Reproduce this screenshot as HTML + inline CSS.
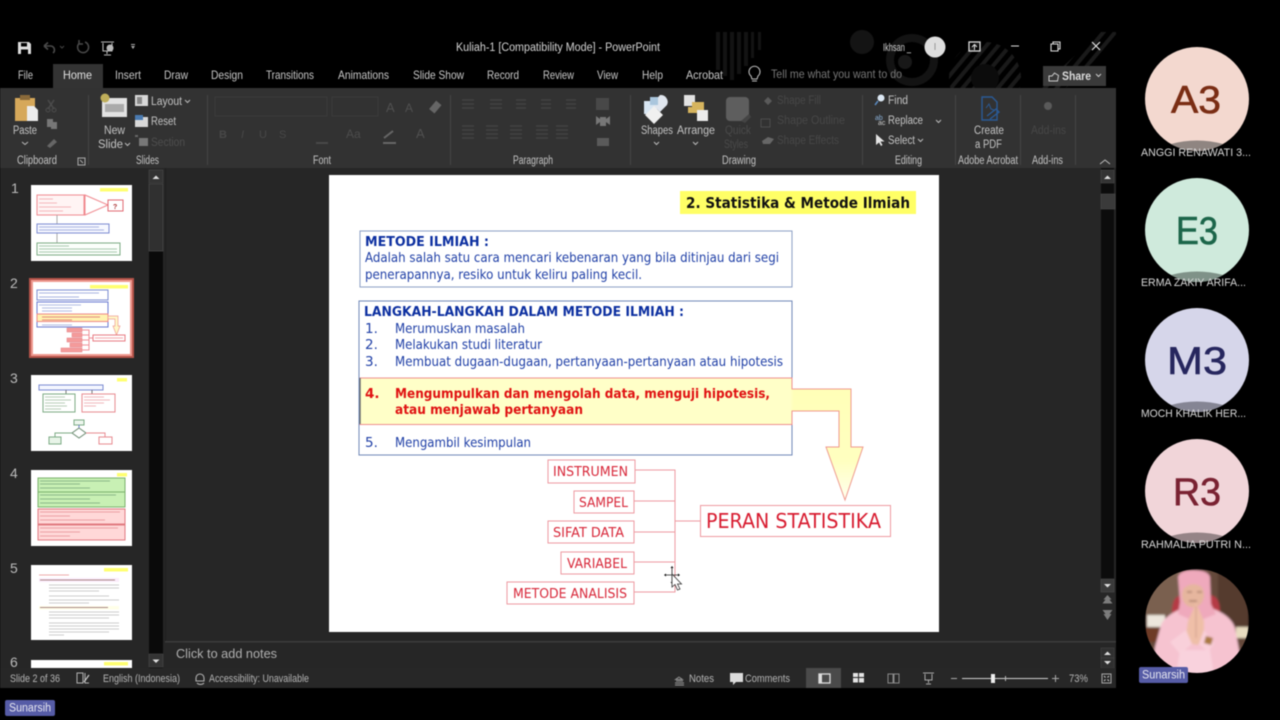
<!DOCTYPE html>
<html><head><meta charset="utf-8"><title>Kuliah-1 - PowerPoint</title>
<style>
html,body{margin:0;padding:0;background:#000;width:1280px;height:720px;overflow:hidden}
svg{display:block;filter:blur(.5px)}
text{font-family:"Liberation Sans",sans-serif;font-size:11px;fill:#d4d4d4}
.tab{font-size:12px;fill:#c8c8c8}
.lb{font-size:11.5px;fill:#c4c4c4}
.st{font-size:11px;fill:#b4b4b4}
.sl{font-family:"DejaVu Sans",sans-serif;font-size:13.5px;fill:#1f3fa6}
.slb{font-family:"DejaVu Sans",sans-serif;font-size:13.5px;font-weight:bold;fill:#0c2fa0}
.red{font-family:"DejaVu Sans",sans-serif;font-size:13.5px;font-weight:bold;fill:#e01212}
.bx{font-family:"DejaVu Sans",sans-serif;font-size:13.5px;fill:#d8283a}
.nm{font-size:11px;fill:#d8d8d8}
.av{font-size:39px;stroke-width:.6px}
.n{font-size:14px;fill:#bbb}
</style></head><body>
<svg width="1280" height="720" viewBox="0 0 1280 720" xmlns="http://www.w3.org/2000/svg">
<defs>
<clipPath id="ph"><circle cx="1197" cy="621" r="52"/></clipPath>
<filter id="b1"><feGaussianBlur stdDeviation="1"/></filter>
<linearGradient id="ag" x1="0" y1="0" x2="0" y2="1"><stop offset="0" stop-color="#ffffb8"/><stop offset=".65" stop-color="#ffffc0"/><stop offset="1" stop-color="#fffff0"/></linearGradient>
<pattern id="dg" width="9" height="9" patternUnits="userSpaceOnUse" patternTransform="rotate(40)"><rect width="4" height="9" fill="#1a1a1a"/></pattern>
</defs>
<rect width="1280" height="720" fill="#000"/>

<!-- title bar -->
<rect x="0" y="32" width="1116" height="56" fill="#000"/>
<g fill="#131313"><rect x="716" y="32" width="4" height="38"/><rect x="723" y="32" width="4" height="44"/><rect x="730" y="32" width="4" height="48"/><rect x="737" y="32" width="4" height="42"/><rect x="744" y="32" width="4" height="34"/><rect x="751" y="32" width="3" height="26"/><rect x="758" y="32" width="3" height="18"/></g>
<circle cx="862" cy="42" r="12" fill="#141414"/>
<circle cx="912" cy="60" r="22" fill="none" stroke="#131313" stroke-width="8"/>
<circle cx="905" cy="62" r="7" fill="#181818"/>
<circle cx="985" cy="78" r="36" fill="url(#dg)"/>
<circle cx="985" cy="78" r="14" fill="#0c0c0c"/>
<path d="M1040 88L1100 32H1116V40L1066 88Z" fill="url(#dg)"/>

<!-- QAT -->
<path d="M18 42h11l2 2v10H18z" fill="#dcdcdc"/><rect x="21" y="43" width="6" height="3.500" fill="#000"/><rect x="21" y="49.500" width="7" height="4.500" fill="#000"/>
<path d="M44 46l4-3.500M44 46l4 3.500M44 46h7a4 4 0 0 1 2 7" stroke="#4a4a4a" stroke-width="1.600" fill="none"/>
<path d="M60 46l2 2 2-2" stroke="#444" fill="none"/>
<path d="M85 42a5.500 5.500 0 1 1-6 1.500M79 40v4h4" stroke="#4a4a4a" stroke-width="1.500" fill="none"/>
<path d="M101 42h13M103 43v8h9v-8M107 51v3M104 55h7" stroke="#b8b8b8" stroke-width="1.100" fill="none"/><circle cx="110" cy="48" r="3.500" fill="#b8b8b8"/>
<path d="M131 46h4l-2 3z" fill="#aaa"/><rect x="131" y="44" width="4" height="1" fill="#aaa"/>
<text x="456" y="51" textLength="204" lengthAdjust="spacingAndGlyphs" style="font-size:11.500px">Kuliah-1 [Compatibility Mode]  -  PowerPoint</text>
<text x="883" y="51" textLength="28" lengthAdjust="spacingAndGlyphs" style="font-size:11px">Ikhsan _</text>
<circle cx="935" cy="47" r="10.500" fill="#dedede"/><rect x="934.500" y="43" width="1" height="7" fill="#999"/>
<rect x="969" y="42" width="11" height="9" fill="none" stroke="#ddd" stroke-width="1.300"/><path d="M974.500 50v-5M972 47l2.500-2.500 2.500 2.500" stroke="#ddd" fill="none"/>
<rect x="1011" y="45.500" width="8" height="1" fill="#ddd"/>
<path d="M1051 44h7v7h-7zM1053 44v-2h7v7h-2" fill="none" stroke="#ddd" stroke-width="1.100"/>
<path d="M1092 42l8 8M1100 42l-8 8" stroke="#e6e6e6" stroke-width="1.200"/>

<!-- tabs -->
<rect x="53" y="64" width="50" height="24" fill="#333"/>
<text class="tab" x="18" y="79" textLength="15" lengthAdjust="spacingAndGlyphs">File</text>
<text class="tab" x="63" y="79" textLength="29" lengthAdjust="spacingAndGlyphs" style="fill:#e2e2e2">Home</text>
<text class="tab" x="115" y="79" textLength="26" lengthAdjust="spacingAndGlyphs">Insert</text>
<text class="tab" x="164" y="79" textLength="24" lengthAdjust="spacingAndGlyphs">Draw</text>
<text class="tab" x="211" y="79" textLength="32" lengthAdjust="spacingAndGlyphs">Design</text>
<text class="tab" x="266" y="79" textLength="48" lengthAdjust="spacingAndGlyphs">Transitions</text>
<text class="tab" x="338" y="79" textLength="51" lengthAdjust="spacingAndGlyphs">Animations</text>
<text class="tab" x="413" y="79" textLength="51" lengthAdjust="spacingAndGlyphs">Slide Show</text>
<text class="tab" x="487" y="79" textLength="32" lengthAdjust="spacingAndGlyphs">Record</text>
<text class="tab" x="543" y="79" textLength="31" lengthAdjust="spacingAndGlyphs">Review</text>
<text class="tab" x="597" y="79" textLength="21" lengthAdjust="spacingAndGlyphs">View</text>
<text class="tab" x="642" y="79" textLength="21" lengthAdjust="spacingAndGlyphs">Help</text>
<text class="tab" x="686" y="79" textLength="37" lengthAdjust="spacingAndGlyphs">Acrobat</text>
<path d="M751 76a5.500 5.500 0 1 1 7 0l-1 3h-5z M752 81h5" fill="none" stroke="#bbb" stroke-width="1.100"/>
<text class="tab" x="771" y="78" textLength="131" lengthAdjust="spacingAndGlyphs" style="fill:#777">Tell me what you want to do</text>
<rect x="1043" y="66" width="63" height="20" fill="#3a3a3a"/>
<path d="M1049 76h3l2.500-3 4 2.500-1 5.500h-8.500z" fill="none" stroke="#ccc"/>
<text x="1062" y="80" textLength="29" lengthAdjust="spacingAndGlyphs" style="font-weight:bold;fill:#dcdcdc;font-size:12px">Share</text>
<path d="M1096 74l2.500 2.500 2.500-2.500" stroke="#ccc" fill="none"/>

<!-- ribbon -->
<rect x="0" y="88" width="1116" height="80" fill="#323232"/>
<g fill="#454545"><rect x="88" y="95" width="1" height="70"/><rect x="207" y="95" width="1" height="70"/><rect x="450" y="95" width="1" height="70"/><rect x="630" y="95" width="1" height="70"/><rect x="862" y="95" width="1" height="70"/><rect x="955" y="95" width="1" height="70"/><rect x="1020" y="95" width="1" height="70"/><rect x="1075" y="95" width="1" height="70"/></g>
<!-- clipboard -->
<path d="M15 98h20v23H15z" fill="#d6a85a"/><rect x="20" y="95" width="10" height="5" fill="#8a6a3a"/><path d="M27 106h7l4 4v11H27z" fill="#ececec"/>
<text class="lb" x="13" y="134" textLength="24" lengthAdjust="spacingAndGlyphs">Paste</text>
<path d="M22 142l3 2.500 3-2.500" stroke="#bbb" fill="none"/>
<path d="M48 100l6 9M54 100l-6 9" stroke="#4c4c4c" stroke-width="1.500"/><circle cx="48" cy="110" r="2" fill="none" stroke="#4c4c4c"/><circle cx="54" cy="110" r="2" fill="none" stroke="#4c4c4c"/>
<path d="M47 119h6v8h-6zM51 122h6v7h-6z" fill="#777"/>
<path d="M47 146l7-7 3 3-7 6z" fill="#666"/>
<text class="lb" x="17" y="164" textLength="40" lengthAdjust="spacingAndGlyphs">Clipboard</text>
<rect x="78" y="158" width="7" height="7" fill="none" stroke="#aaa"/><path d="M80 160l3 3" stroke="#aaa"/>
<!-- slides -->
<rect x="102" y="98" width="25" height="19" fill="#e2e2e2"/><rect x="105" y="104" width="19" height="8" fill="#aaa"/><circle cx="105" cy="98" r="4.500" fill="#bfae5a"/>
<text class="lb" x="104" y="134" textLength="21" lengthAdjust="spacingAndGlyphs">New</text>
<text class="lb" x="98" y="148" textLength="25" lengthAdjust="spacingAndGlyphs">Slide</text>
<path d="M125 143l2.500 2.500 2.500-2.500" stroke="#bbb" fill="none"/>
<rect x="135" y="95" width="13" height="11" fill="#d8d8d8"/><rect x="137" y="97" width="5" height="7" fill="#888"/>
<rect x="135" y="117" width="13" height="10" fill="#d8d8d8"/><rect x="135" y="115" width="8" height="5" fill="#4a7ab0"/>
<rect x="139" y="138" width="9" height="8" fill="#777"/><rect x="135" y="135" width="3" height="2" fill="#666"/>
<text class="lb" x="151" y="105" textLength="31" lengthAdjust="spacingAndGlyphs">Layout</text>
<path d="M185 100l2.500 2.500 2.500-2.500" stroke="#bbb" fill="none"/>
<text class="lb" x="151" y="125" textLength="25" lengthAdjust="spacingAndGlyphs">Reset</text>
<text class="lb" x="151" y="146" textLength="34" lengthAdjust="spacingAndGlyphs" style="fill:#4e4e4e">Section</text>
<text class="lb" x="136" y="164" textLength="23" lengthAdjust="spacingAndGlyphs">Slides</text>
<!-- font (disabled) -->
<rect x="215" y="97" width="112" height="19" fill="none" stroke="#3b3b3b"/><rect x="332" y="97" width="46" height="19" fill="none" stroke="#3b3b3b"/>
<text x="386" y="112" style="fill:#505050;font-size:13px">A</text><text x="405" y="112" style="fill:#505050;font-size:12px">A</text><text x="219" y="138" style="fill:#484848;font-weight:bold">B</text><text x="241" y="138" style="fill:#484848;font-style:italic">I</text><text x="259" y="138" style="fill:#484848">U</text><text x="279" y="138" style="fill:#484848">S</text><text x="346" y="138" style="fill:#4c4c4c;font-size:12px">Aa</text><text x="416" y="138" style="fill:#505050;font-size:13px">A</text>
<rect x="432" y="102" width="7" height="11" fill="#666" transform="rotate(40 436 107)"/>
<rect x="383" y="142" width="13" height="2" fill="#666"/><path d="M384 138l9-7" stroke="#666" stroke-width="2"/>
<rect x="316" y="142" width="12" height="2" fill="#484848"/>
<text class="lb" x="313" y="164" textLength="18" lengthAdjust="spacingAndGlyphs">Font</text>
<!-- paragraph (disabled) -->
<g stroke="#464646" stroke-width="1.200"><path d="M462 100h12M462 104h12M462 108h12M490 100h12M490 104h12M490 108h12M516 100h10M516 104h10M516 108h10M541 100h10M541 104h10M541 108h10M566 100h10M566 104h10M566 108h10M462 126h12M462 130h12M462 134h12M462 138h12M486 126h12M486 130h12M486 134h12M486 138h12M510 126h12M510 130h12M510 134h12M510 138h12M536 126h12M536 130h12M536 134h12M536 138h12M556 126h12M556 130h12M556 134h12M556 138h12"/></g>
<rect x="596" y="98" width="13" height="12" fill="#484848"/>
<path d="M596 116l4 3v3l-4 3zM610 116l-4 3v3l4 3zM600 117h6v9h-6z" fill="#777"/>
<rect x="597" y="138" width="12" height="8" fill="#5a5a5a"/>
<text class="lb" x="513" y="164" textLength="40" lengthAdjust="spacingAndGlyphs">Paragraph</text>
<!-- drawing -->
<path d="M644 101h13v13h-13z" fill="#d8e6f2"/><path d="M660 95a7 7 0 0 1 7 10l-7 7-8-8z" fill="#e0e6ee"/><path d="M654 106l9 9-9 9-9-9z" fill="#f0f0f0"/><rect x="650" y="97" width="8" height="8" fill="#aac6dd"/>
<text class="lb" x="641" y="134" textLength="32" lengthAdjust="spacingAndGlyphs">Shapes</text>
<path d="M654 142l2.500 2.500 2.500-2.500" stroke="#bbb" fill="none"/>
<rect x="684" y="95" width="11" height="11" fill="#e2e2e2"/><rect x="692" y="102" width="12" height="11" fill="#d6b45e"/><rect x="697" y="110" width="11" height="11" fill="#ececec"/><rect x="688" y="107" width="8" height="6" fill="#d6b45e"/>
<text class="lb" x="677" y="134" textLength="38" lengthAdjust="spacingAndGlyphs">Arrange</text>
<path d="M693 142l2.500 2.500 2.500-2.500" stroke="#bbb" fill="none"/>
<rect x="726" y="97" width="23" height="24" rx="4" fill="#5e5e5e"/><path d="M741 121l8-7 2 3-6 6z" fill="#444"/>
<text class="lb" x="725" y="134" textLength="26" lengthAdjust="spacingAndGlyphs" style="fill:#4a4a4a">Quick</text>
<text class="lb" x="724" y="148" textLength="24" lengthAdjust="spacingAndGlyphs" style="fill:#4a4a4a">Styles</text>
<path d="M764 101l4-4 4 4-4 4z" fill="#5a5a5a"/><rect x="761" y="119" width="9" height="8" fill="none" stroke="#4c4c4c"/><path d="M762 141l6-4 6 2-4 5h-7z" fill="#666"/>
<text class="lb" x="777" y="104" textLength="44" lengthAdjust="spacingAndGlyphs" style="fill:#474747">Shape Fill</text>
<text class="lb" x="777" y="124" textLength="68" lengthAdjust="spacingAndGlyphs" style="fill:#474747">Shape Outline</text>
<text class="lb" x="777" y="144" textLength="62" lengthAdjust="spacingAndGlyphs" style="fill:#474747">Shape Effects</text>
<text class="lb" x="722" y="164" textLength="34" lengthAdjust="spacingAndGlyphs">Drawing</text>
<!-- editing -->
<circle cx="881" cy="98" r="3.500" fill="#dce8f4"/><path d="M878 101l-3 4" stroke="#5a8ac0" stroke-width="1.500"/>
<text class="lb" x="888" y="104" textLength="20" lengthAdjust="spacingAndGlyphs">Find</text>
<text x="875" y="120" style="font-size:7px;fill:#8ab0d8">ab</text><text x="878" y="125" style="font-size:7px;fill:#ccc">ac</text>
<text class="lb" x="888" y="124" textLength="35" lengthAdjust="spacingAndGlyphs">Replace</text>
<path d="M936 120l2.500 2.500 2.500-2.500" stroke="#bbb" fill="none"/>
<path d="M876 134v11l3-2.500 2 3.500 1.500-1-2-3.500h4z" fill="#e4e4e4"/>
<text class="lb" x="888" y="144" textLength="27" lengthAdjust="spacingAndGlyphs">Select</text>
<path d="M918 139l2.500 2.500 2.500-2.500" stroke="#bbb" fill="none"/>
<text class="lb" x="895" y="164" textLength="27" lengthAdjust="spacingAndGlyphs">Editing</text>
<!-- acrobat -->
<path d="M982 97h10l5 5v18h-15z" fill="none" stroke="#2a5a96" stroke-width="1.400"/><path d="M987 116l9-7 3 3-9 7" fill="none" stroke="#2a5a96" stroke-width="1.400"/><path d="M986 108l3-4 2 5 3 1" fill="none" stroke="#2a5a96"/>
<text class="lb" x="974" y="134" textLength="30" lengthAdjust="spacingAndGlyphs">Create</text>
<text class="lb" x="975" y="148" textLength="27" lengthAdjust="spacingAndGlyphs">a PDF</text>
<text class="lb" x="958" y="164" textLength="60" lengthAdjust="spacingAndGlyphs">Adobe Acrobat</text>
<!-- add-ins -->
<circle cx="1048" cy="106" r="4" fill="#5a5a5a"/>
<text class="lb" x="1031" y="134" textLength="35" lengthAdjust="spacingAndGlyphs" style="fill:#474747">Add-ins</text>
<text class="lb" x="1032" y="164" textLength="31" lengthAdjust="spacingAndGlyphs">Add-ins</text>
<path d="M1100 164l5-4 5 4" stroke="#bbb" fill="none"/>

<!-- main area -->
<rect x="0" y="168" width="1116" height="500" fill="#262626"/>
<rect x="165" y="168" width="1" height="474" fill="#1f1f1f"/>
<!-- thumbs scrollbar -->
<rect x="149" y="170" width="14" height="498" fill="#0a0a0a"/>
<rect x="149" y="170" width="14" height="13" fill="#333" stroke="#4a4a4a" stroke-width=".6"/><path d="M152.500 179l3.500-3.500 3.500 3.500z" fill="#ddd"/>
<rect x="149" y="184" width="14" height="67" fill="#303030" stroke="#484848" stroke-width=".8"/>
<rect x="149" y="654" width="14" height="13" fill="#333" stroke="#4a4a4a" stroke-width=".6"/><path d="M152.500 659.500l3.500 3.500 3.500-3.500z" fill="#ddd"/>

<!-- slide numbers -->
<text class="n" x="11" y="193">1</text><text class="n" x="10" y="288">2</text><text class="n" x="10" y="383">3</text><text class="n" x="10" y="478">4</text><text class="n" x="10" y="573">5</text><text class="n" x="10" y="667">6</text>

<!-- thumb 1 -->
<rect x="31" y="185" width="101" height="76" fill="#fff"/>
<rect x="100" y="188" width="28" height="3.500" fill="#ffff70"/>
<rect x="37" y="195" width="47" height="20" fill="#fff4f4" stroke="#f08a90"/>
<g stroke="#f5b8bc"><path d="M39 199h14M39 203h18M39 207h32M39 211h24"/></g>
<path d="M85 195l23 10-23 10z" fill="#fff" stroke="#f08a90"/>
<rect x="108" y="200" width="15" height="11" fill="#fff" stroke="#e06a72"/><text x="113" y="209" style="font-size:7px;font-weight:bold;fill:#a33">?</text>
<path d="M57 215v29" stroke="#aaa"/>
<rect x="37" y="224" width="72" height="9" fill="#f6f8ff" stroke="#7a8ad0"/><path d="M39 227h60M39 230h65" stroke="#a8b4e0"/>
<rect x="37" y="243" width="83" height="12" fill="#fbfffb" stroke="#7cab84"/><path d="M39 246h30M39 249h78M39 252h78" stroke="#a8c8ae"/>

<!-- thumb 2 -->
<rect x="29" y="278" width="105" height="80" fill="#b5534a"/>
<rect x="31" y="280" width="101" height="76" fill="#ef9a90"/>
<rect x="33" y="282" width="97" height="72" fill="#fff"/>
<rect x="90" y="285" width="38" height="3.500" fill="#ffff70"/>
<rect x="37" y="290" width="71" height="10" fill="#fff" stroke="#7a8ad0"/><path d="M39 293h60M39 297h40" stroke="#a8b4e0"/>
<rect x="37" y="302" width="71" height="25" fill="#fff" stroke="#6a7ad0"/><path d="M39 305h42M42 308h30M42 311h30M42 314h60M42 325h30" stroke="#b0bae4"/>
<rect x="37" y="314" width="71" height="7.500" fill="#fff3b0" stroke="#e88"/><path d="M42 317h58M42 320h30" stroke="#e58a80"/>
<path d="M108 316h10v10h2l-3.500 9-3.500-9h2v-7h-7z" fill="#fff8c8" stroke="#ee9a90" stroke-width=".7"/>
<g fill="#f49a9a" stroke="#e27a80" stroke-width=".5"><rect x="67" y="328" width="15" height="4"/><rect x="72" y="333" width="10" height="4"/><rect x="67" y="338" width="15" height="4"/><rect x="70" y="343" width="12" height="4"/><rect x="61" y="348" width="21" height="4"/></g>
<path d="M82 330h7v20h-7M82 335h7M82 340h7M82 345h7M89 338h4" stroke="#f09098" fill="none"/>
<rect x="93" y="335" width="32" height="6" fill="#fff" stroke="#e87a82"/><path d="M95 338h28" stroke="#f5a8ac"/>

<!-- thumb 3 -->
<rect x="31" y="375" width="101" height="76" fill="#fff"/>
<rect x="117" y="378" width="10" height="3.500" fill="#ffff70"/>
<rect x="39" y="385" width="64" height="5" fill="#f4f6ff" stroke="#7a8ad0"/>
<path d="M66 390v4M92 390v4" stroke="#777"/>
<rect x="43" y="394" width="32" height="18" fill="#fff" stroke="#7cab84"/><path d="M45 397h20M45 400h26M45 403h20M45 406h22M45 409h16" stroke="#b8ceb8"/>
<rect x="82" y="394" width="33" height="18" fill="#fff" stroke="#e88a90"/><path d="M84 397h20M84 400h26M84 403h20M84 406h12" stroke="#f0b8bc"/>
<rect x="74" y="420" width="10" height="5" fill="#eef6ee" stroke="#7cab84"/>
<path d="M79 425v3" stroke="#6a7ad0"/><path d="M79 428l7 5-7 5-7-5z" fill="#fff" stroke="#6a8a70"/>
<path d="M72 433H55v4" fill="none" stroke="#7cab84"/><path d="M86 433h19v4" fill="none" stroke="#e88a90"/>
<rect x="49" y="437" width="12" height="7" fill="#e8f4e8" stroke="#7cab84"/><rect x="99" y="437" width="13" height="7" fill="#fff" stroke="#e88a90"/>

<!-- thumb 4 -->
<rect x="31" y="470" width="101" height="76" fill="#fff"/>
<rect x="117" y="473" width="10" height="3.500" fill="#ffff70"/>
<rect x="38" y="478" width="87" height="14" fill="#c8f0b4" stroke="#7ab06c"/><rect x="38" y="492" width="87" height="15" fill="#c8f0b4" stroke="#7ab06c"/>
<path d="M40 481h70M40 484h40M40 488h50M40 495h76M40 499h50M40 503h60" stroke="#8ab88a"/>
<rect x="38" y="509" width="87" height="15" fill="#ffd8d8" stroke="#e07a80"/><rect x="38" y="525" width="87" height="15" fill="#ffd8d8" stroke="#e07a80"/>
<path d="M40 512h80M40 516h30M40 520h65M40 528h78M40 532h40M40 536h30" stroke="#eca0a4"/>

<!-- thumb 5 -->
<rect x="31" y="565" width="101" height="75" fill="#fff"/>
<rect x="104" y="568" width="24" height="3.500" fill="#ffff70"/>
<path d="M39 575h30" stroke="#eaa"/>
<rect x="39" y="578" width="80" height="4" fill="#fbecfb"/><path d="M40 580h75" stroke="#a88"/>
<path d="M49 585h70M49 588h70M49 591h50M49 596h60M49 600h70M49 603h40" stroke="#ccc"/>
<rect x="39" y="606" width="80" height="3.500" fill="#ffffe8"/><path d="M40 607.500h68" stroke="#a88"/>
<path d="M49 612h70M49 615h70M49 618h60M49 623h70M49 626h70M49 629h70M49 632h60M49 635h15" stroke="#ccc"/>

<!-- thumb 6 -->
<rect x="31" y="660" width="101" height="8" fill="#fff"/><rect x="104" y="662" width="24" height="3.500" fill="#ffff70"/>

<!-- right scrollbar -->
<rect x="1101" y="168" width="13" height="411" fill="#0c0c0c"/>
<rect x="1101" y="170" width="13" height="13" fill="#333" stroke="#4a4a4a" stroke-width=".6"/><path d="M1104 179l3.500-3.500 3.500 3.500z" fill="#ddd"/>
<rect x="1101" y="194" width="14" height="15" fill="#3a3a3a" stroke="#4c4c4c" stroke-width=".6"/>
<rect x="1101" y="579" width="13" height="13" fill="#3a3a3a" stroke="#4a4a4a" stroke-width=".6"/><path d="M1104 584l3.500 3.500 3.500-3.500z" fill="#ddd"/>
<path d="M1107.500 595l4 4.500h-2l3 4h-10l3-4h-2z" fill="#7c7c7c"/>
<path d="M1102.500 610h10l-3 4h2l-4 6-4-6h2z" fill="#7c7c7c"/>

<!-- slide -->
<rect x="329" y="175" width="610" height="457" fill="#fff"/>
<rect x="680" y="191" width="236" height="23" fill="#ffff66"/>
<text x="686" y="208" textLength="224" lengthAdjust="spacingAndGlyphs" style="font-family:'DejaVu Sans',sans-serif;font-weight:bold;font-size:15px;fill:#111">2. Statistika &amp; Metode Ilmiah</text>

<rect x="360" y="231" width="432" height="56" fill="#fff" stroke="#8d9fc4" stroke-width="1"/>
<text class="slb" x="365" y="246" textLength="124" lengthAdjust="spacingAndGlyphs">METODE ILMIAH :</text>
<text class="sl" x="365" y="262" textLength="414" lengthAdjust="spacingAndGlyphs">Adalah salah satu cara mencari kebenaran yang bila ditinjau dari segi</text>
<text class="sl" x="365" y="279" textLength="277" lengthAdjust="spacingAndGlyphs">penerapannya, resiko untuk keliru paling kecil.</text>

<rect x="359" y="301" width="433" height="154" fill="#fff" stroke="#6f87b8" stroke-width="1"/>
<text class="slb" x="364" y="316" textLength="320" lengthAdjust="spacingAndGlyphs">LANGKAH-LANGKAH DALAM METODE ILMIAH :</text>
<text class="sl" x="365" y="333">1.</text><text class="sl" x="395" y="333" textLength="130" lengthAdjust="spacingAndGlyphs">Merumuskan masalah</text>
<text class="sl" x="365" y="349">2.</text><text class="sl" x="395" y="349" textLength="147" lengthAdjust="spacingAndGlyphs">Melakukan studi literatur</text>
<text class="sl" x="365" y="366">3.</text><text class="sl" x="395" y="366" textLength="388" lengthAdjust="spacingAndGlyphs">Membuat dugaan-dugaan, pertanyaan-pertanyaan atau hipotesis</text>

<rect x="360" y="378" width="432" height="46.500" fill="#ffffc8" stroke="#ee8f8f" stroke-width="1"/>
<rect x="359.500" y="378" width="1.200" height="46" fill="#666"/>
<path d="M792 389H851V447H863L845 500L826 447H839V411H792Z" fill="url(#ag)" stroke="#ef9a8e" stroke-width="1"/>
<rect x="791" y="389.500" width="2" height="21" fill="#ffffc0"/>
<text class="red" x="365" y="398">4.</text>
<text class="red" x="395" y="398" textLength="375" lengthAdjust="spacingAndGlyphs">Mengumpulkan dan mengolah data, menguji hipotesis,</text>
<text class="red" x="395" y="414" textLength="188" lengthAdjust="spacingAndGlyphs">atau menjawab pertanyaan</text>
<text class="sl" x="365" y="447">5.</text><text class="sl" x="395" y="447" textLength="136" lengthAdjust="spacingAndGlyphs">Mengambil kesimpulan</text>

<g fill="#fff" stroke="#ee9aa0" stroke-width="1">
<rect x="548" y="460" width="87" height="23"/><rect x="574" y="491" width="60" height="22"/><rect x="548" y="521" width="86" height="22"/><rect x="561" y="552" width="73" height="22"/><rect x="507" y="582" width="127" height="22"/><rect x="700.500" y="505.500" width="190" height="31"/>
<path fill="none" d="M635 470H675V592H634M634 501H675M634 532H675M634 562H675M675 521H700"/>
</g>
<text class="bx" x="553" y="476" textLength="75" lengthAdjust="spacingAndGlyphs">INSTRUMEN</text>
<text class="bx" x="579" y="507" textLength="49" lengthAdjust="spacingAndGlyphs">SAMPEL</text>
<text class="bx" x="553" y="537" textLength="71" lengthAdjust="spacingAndGlyphs">SIFAT DATA</text>
<text class="bx" x="567" y="568" textLength="60" lengthAdjust="spacingAndGlyphs">VARIABEL</text>
<text class="bx" x="513" y="598" textLength="114" lengthAdjust="spacingAndGlyphs">METODE ANALISIS</text>
<text class="bx" x="706" y="528" textLength="175" lengthAdjust="spacingAndGlyphs" style="font-size:20px;fill:#d81c30">PERAN STATISTIKA</text>

<!-- cursor -->
<path d="M672 568v14M665 575h14" stroke="#222" stroke-width=".8"/><path d="M672 566l-1.500 2h3zM672 584l-1.500-2h3zM664 575l2-1.500v3zM680 575l-2-1.500v3z" fill="#111"/>
<path d="M672 574v13l3-2.500 2.500 5.500 2.500-1-2.500-5h4z" fill="#fff" stroke="#333" stroke-width=".8"/>

<!-- notes bar -->
<rect x="165" y="641" width="951" height="1.500" fill="#3c3c3c"/>
<text x="176" y="658" textLength="101" lengthAdjust="spacingAndGlyphs" style="font-size:13px;fill:#b0b0b0">Click to add notes</text>
<rect x="1101" y="648" width="13" height="10" fill="#2f2f2f" stroke="#444" stroke-width=".6"/><path d="M1104 655l3.500-3.500 3.500 3.500z" fill="#ddd"/>
<rect x="1101" y="658" width="13" height="10" fill="#2f2f2f" stroke="#444" stroke-width=".6"/><path d="M1104 661l3.500 3.500 3.500-3.500z" fill="#ddd"/>

<!-- status bar -->
<rect x="0" y="668" width="1116" height="20" fill="#272727"/>
<text class="st" x="10" y="682" textLength="50" lengthAdjust="spacingAndGlyphs">Slide 2 of 36</text>
<path d="M77 673h6v10h-6zM85 673v10h4" fill="none" stroke="#b0b0b0"/><path d="M84 682l5-7" stroke="#ccc" stroke-width="1.200"/>
<text class="st" x="103" y="682" textLength="77" lengthAdjust="spacingAndGlyphs">English (Indonesia)</text>
<path d="M196 678a4 4 0 0 1 8 0v3h-8zM197 683a5 5 0 0 0 7 0" fill="none" stroke="#b0b0b0" stroke-width="1.100"/>
<text class="st" x="209" y="682" textLength="100" lengthAdjust="spacingAndGlyphs">Accessibility: Unavailable</text>
<path d="M679 677l-3.500 2.500h7zM676 681h7M675 683h9M675 685h9" stroke="#999" fill="none" stroke-width=".9"/>
<text class="st" x="689" y="682" textLength="25" lengthAdjust="spacingAndGlyphs">Notes</text>
<path d="M730 673h13v9h-7l-3 3v-3h-3z" fill="#dcdcdc"/>
<text class="st" x="745" y="682" textLength="45" lengthAdjust="spacingAndGlyphs">Comments</text>
<rect x="806" y="668" width="35" height="20" fill="#4a4a4a"/>
<rect x="819" y="674" width="11" height="9" fill="none" stroke="#ddd" stroke-width="1.300"/><rect x="819" y="674" width="3" height="9" fill="#ddd"/>
<g fill="#e4e4e4"><rect x="853" y="673" width="5" height="4"/><rect x="859" y="673" width="5" height="4"/><rect x="853" y="678" width="5" height="4.500"/><rect x="859" y="678" width="5" height="4.500"/></g>
<path d="M888 674h5v9h-5zM894 674h5v9h-5z" fill="none" stroke="#8a8a8a"/>
<path d="M923 673h11M925 674v6h7v-6M928.500 680v3M926 684h5" fill="none" stroke="#a8a8a8"/>
<rect x="951" y="678" width="6" height="1" fill="#aaa"/>
<rect x="962" y="678" width="86" height="1" fill="#cfcfcf"/>
<rect x="991" y="674" width="4" height="9" fill="#eee"/><rect x="1005" y="676" width="1" height="5" fill="#bbb"/>
<path d="M1052 678.500h7M1055.500 675v7" stroke="#aaa"/>
<text class="st" x="1069" y="682" textLength="19" lengthAdjust="spacingAndGlyphs">73%</text>
<rect x="1102" y="674" width="9" height="9" fill="none" stroke="#aaa"/><path d="M1104 676l1.500 1.500M1109 676l-1.500 1.500M1104 681l1.500-1.500M1109 681l-1.500-1.500" stroke="#ccc"/>

<!-- participants -->
<circle cx="1197" cy="99" r="52" fill="#f3d8cf"/><path d="M1171 144a52 52 0 0 0 52 0q-26 -7 -52 0z" fill="#8f8581"/>
<text class="av" x="1171" y="113" textLength="50" lengthAdjust="spacingAndGlyphs" style="fill:#7a2d14;stroke:#7a2d14">A3</text>
<text class="nm" x="1141" y="156" textLength="110" lengthAdjust="spacingAndGlyphs">ANGGI RENAWATI 3...</text>

<circle cx="1197" cy="230" r="52" fill="#cfeadc"/><path d="M1171 275a52 52 0 0 0 52 0q-26 -7 -52 0z" fill="#7f9288"/>
<text class="av" x="1176" y="244" textLength="42" lengthAdjust="spacingAndGlyphs" style="fill:#1c664a;stroke:#1c664a">E3</text>
<text class="nm" x="1141" y="286" textLength="105" lengthAdjust="spacingAndGlyphs">ERMA ZAKIY ARIFA...</text>

<circle cx="1197" cy="360" r="52" fill="#d6d6ea"/><path d="M1171 405a52 52 0 0 0 52 0q-26 -7 -52 0z" fill="#858594"/>
<text class="av" x="1167" y="374" textLength="60" lengthAdjust="spacingAndGlyphs" style="fill:#26265e;stroke:#26265e">M3</text>
<text class="nm" x="1141" y="417" textLength="105" lengthAdjust="spacingAndGlyphs">MOCH KHALIK HER...</text>

<circle cx="1197" cy="491" r="52" fill="#f1d5d9"/><path d="M1171 536a52 52 0 0 0 52 0q-26 -7 -52 0z" fill="#958487"/>
<text class="av" x="1173" y="505" textLength="48" lengthAdjust="spacingAndGlyphs" style="fill:#7a2232;stroke:#7a2232">R3</text>
<text class="nm" x="1141" y="548" textLength="110" lengthAdjust="spacingAndGlyphs">RAHMALIA PUTRI N...</text>

<!-- photo -->
<g clip-path="url(#ph)"><g filter="url(#b1)">
<rect x="1145" y="569" width="104" height="104" fill="#65483a"/>
<rect x="1145" y="569" width="36" height="46" fill="#7a6050"/>
<rect x="1218" y="569" width="31" height="58" fill="#553a2e"/>
<path d="M1172 612q0-16 10-17h28q10 1 10 17v8h-48z" fill="#b53a44"/>
<rect x="1147" y="615" width="18" height="12" fill="#ece6dc"/><rect x="1145" y="628" width="14" height="14" fill="#6e3a28"/><rect x="1236" y="627" width="13" height="11" fill="#e8dcc0"/>
<path d="M1152 673l3-26 6-22q4-10 22-17h28q20 7 24 20l5 27 2 18z" fill="#f6c3d0"/>
<path d="M1178 577q2-7 15-7q15 0 17 7l1 27 5 10-20 8-18-8 2-12z" fill="#efa9bc"/>
<ellipse cx="1193" cy="595" rx="11" ry="12.500" fill="#e6b69e"/>
<path d="M1182 590q10-11 23-1v-8q-10-5-23-1z" fill="#efa9bc"/>
<path d="M1187 592h5M1197 592h5M1189 601h8" stroke="#7a5040" stroke-width="1"/>
<path d="M1196 603l-8 18-2 14 6 9 6 1 6-9 0-15z" fill="#efbfa8"/>
<path d="M1196 606v32" stroke="#c89480" stroke-width=".8"/>
<path d="M1186 630l-16 12 10 12 12-10zM1204 630l10 14-6 8-9-8z" fill="#f9d0da"/>
<path d="M1206 636l7 2-2 7-7-2z" fill="#a87840"/>
<path d="M1180 650h30l4 25h-38z" fill="#f9d2dd"/>
</g></g>
<rect x="1139" y="667" width="49" height="16" rx="2" fill="#565ca6"/>
<text x="1142" y="678.500" textLength="43" lengthAdjust="spacingAndGlyphs" style="font-size:11.500px;fill:#e6e6f0">Sunarsih</text>

<rect x="5" y="700" width="50" height="16" rx="2" fill="#565ca6"/>
<text x="9" y="711.500" textLength="42" lengthAdjust="spacingAndGlyphs" style="font-size:11.500px;fill:#e6e6f0">Sunarsih</text>
</svg>
</body></html>
